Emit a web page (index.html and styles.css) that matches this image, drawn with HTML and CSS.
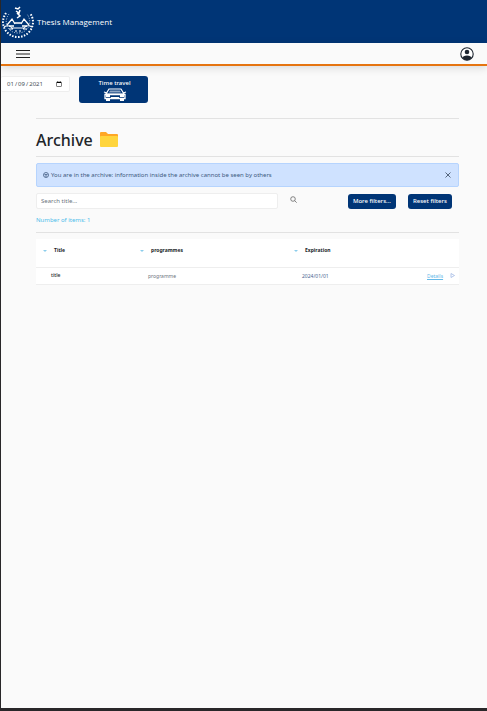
FILE: index.html
```html
<!DOCTYPE html>
<html lang="en">
<head>
<meta charset="utf-8">
<meta name="viewport" content="width=device-width, initial-scale=1">
<title>Thesis Management</title>
<link rel="stylesheet" href="styles.css">
</head>
<body>
<header class="brand">
  <svg class="crest" viewBox="0 0 34 34" fill="none" stroke="#fff" aria-hidden="true">
    <path d="M5 8Q-1 17 5 26Q10 32 17 32Q24 32 29 26Q35 17 29 8" stroke-width="2" stroke-dasharray="1.500 1.500"/>
    <path d="M8 9Q3 16 7 23Q11 28 17 28Q23 28 27 23Q31 16 26 9" stroke-width=".8" stroke-dasharray="1 1.500"/>
    <path d="M14 3l3 1 2-2M15 6l3 2 1-3M16 8l3 3-3 2" stroke-width="1.500"/>
    <path d="M6 20l5-6 3 5M20 19l3-5 5 6M8 21h5M21 21h5M13 18h8" stroke-width="1.300"/>
    <path d="M3 22q5-3 8 1h12q3-4 8-1M8 24h4M22 24h4M14 26h2M18 26h2" stroke-width="1.100"/>
  </svg>
  <span>Thesis Management</span>
</header>
<nav class="toolbar">
  <button class="icon-button" aria-label="Menu">
    <svg class="menu-icon" viewBox="0 0 14 10" stroke="#222" stroke-width="1"><path d="M0 1.500h14M0 5h14M0 8.500h14"/></svg>
  </button>
  <button class="icon-button" aria-label="Account">
    <svg class="user-icon" viewBox="0 0 14 14"><circle cx="7" cy="7" r="6.200" fill="#fff" stroke="#1d2530" stroke-width="1.100"/><circle cx="7" cy="5" r="2.300" fill="#1d2530"/><path d="M2.300 11Q3 8.400 7 8.400T11.700 11Q9.800 13.200 7 13.200T2.300 11z" fill="#1d2530"/></svg>
  </button>
</nav>
<div class="time-row">
  <input class="date" type="date" value="2021-01-09" aria-label="Current date">
  <button class="button travel">Time travel
    <svg class="car" viewBox="0 0 24 13" fill="none" stroke="#fff" aria-hidden="true">
      <path d="M6 1h12l3 5H3z" stroke-width="1.200"/><path d="M7 2.500h10l1 2H6z" fill="#8da5c4" stroke="none"/>
      <path d="M1 4l3 1M23 4l-3 1M2 6.500h20v4H2z" stroke-width="1.300"/><path d="M3 7h4v2H3zM17 7h4v2h-4zM8 9h8v1.500H8zM3 11h4v2H3zM17 11h4v2h-4z" fill="#fff" stroke="none"/>
    </svg>
  </button>
</div>
<main class="content">
  <h1 class="heading">Archive
    <svg class="folder" viewBox="0 0 18 16" aria-hidden="true"><path d="M1 0h5l2 2h9q1 0 1 1v9H0V1q0-1 1-1z" fill="#ffa726"/><path d="M1 4h16q1 0 1 1v9q0 1-1 1H1q-1 0-1-1V5q0-1 1-1z" fill="#ffd53d"/></svg>
  </h1>
  <div class="alert" role="status">
    <svg class="notice-icon" viewBox="0 0 6 6" fill="none" stroke="#405a80" stroke-width=".8" aria-hidden="true"><circle cx="3" cy="3" r="2.500"/><path d="M1.500 2.500h3M2 4h2"/></svg>
    <span class="message">You are in the archive: information inside the archive cannot be seen by others</span>
    <button class="icon-button" aria-label="Close"><svg class="close-icon" viewBox="0 0 6 6" stroke="#56677e" stroke-width="1"><path d="M.5 .5l5 5M5.500 .5l-5 5"/></svg></button>
  </div>
  <div class="filters">
    <input class="search" type="text" placeholder="Search title..." aria-label="Search title">
    <button class="icon-button search-button" aria-label="Search"><svg class="search-icon" viewBox="0 0 7 7" fill="none" stroke="#555" stroke-width=".7"><circle cx="3" cy="3" r="2.300"/><path d="M4.700 4.700l2 2"/></svg></button>
    <button class="button">More filters...</button>
    <button class="button">Reset filters</button>
  </div>
  <p class="count">Number of items: 1</p>
  <table class="items">
    <colgroup><col class="col-title"><col class="col-programme"><col><col class="col-details"><col class="col-open"></colgroup>
    <thead><tr><th><i class="sort"></i>Title</th><th><i class="sort"></i>programmes</th><th><i class="sort"></i>Expiration</th><th></th><th></th></tr></thead>
    <tbody><tr><td class="name">title</td><td>programme</td><td class="expiry">2024/01/01</td><td><a class="details" href="#">Details</a></td><td><svg class="open-icon" viewBox="0 0 5 5" fill="none" stroke="#a2b9e5" stroke-width=".8"><path d="M1 .5l3.500 2-3.500 2z"/></svg></td></tr></tbody>
  </table>
</main>
</body>
</html>
```
FILE: styles.css
```css
* { box-sizing: border-box; }
body {
  margin: 0;
  min-height: 100vh;
  border-left: 1px solid #292729;
  border-bottom: 3px solid #292729;
  background: #fafafa;
  color: #212529;
  font: 6px/10px "Noto Sans", sans-serif;
}
button, input { font: inherit; }
.brand {
  display: flex;
  align-items: center;
  gap: 2px;
  height: 43px;
  background: #003576;
  color: #fff;
  font-family: "Open Sans", "Noto Sans", sans-serif;
  font-size: 8px;
  font-weight: 500;
}
.crest { width: 34px; height: 34px; }
.toolbar {
  display: flex;
  align-items: center;
  justify-content: space-between;
  height: 23px;
  padding: 0 13px 0 15px;
  border-bottom: 2px solid #e57410;
  box-shadow: 0 2px 8px #0002;
}
.icon-button {
  display: flex;
  padding: 0;
  border: 0;
  background: none;
}
.menu-icon { width: 14px; height: 10px; }
.user-icon { width: 14px; height: 14px; }
.time-row {
  display: flex;
  align-items: flex-start;
  gap: 9px;
  padding-top: 10px;
}
.date {
  width: 69px;
  height: 16px;
  padding: 0 5px;
  border: 1px solid #eee;
  border-left: 0;
  border-radius: 2px;
  background: #fff;
  color: #495057;
}
.button {
  height: 15px;
  padding: 0 5px;
  border: 0;
  border-radius: 3px;
  background: #003576;
  color: #fff;
  font-weight: 500;
}
.travel {
  display: flex;
  flex-direction: column;
  align-items: center;
  justify-content: center;
  width: 69px;
  height: 27px;
  padding-left: 7px;
}
.car { width: 24px; height: 13px; }
.content { margin: 15px 28px 0 35px; }
.heading {
  display: flex;
  align-items: center;
  gap: 7px;
  height: 39px;
  margin: 0 0 6px;
  padding-top: 5px;
  border-top: 1px solid #e2e2e2;
  border-bottom: 1px solid #e2e2e2;
  font-size: 16px;
  font-weight: 500;
}
.folder { width: 18px; height: 16px; }
.alert {
  display: flex;
  align-items: center;
  gap: 2px;
  height: 24px;
  padding: 0 7px 0 6px;
  border: 1px solid #b6d4fe;
  border-radius: 2px;
  background: #cfe2ff;
  color: #405a80;
}
.notice-icon, .close-icon { width: 6px; height: 6px; }
.message { flex: 1; }
.filters {
  display: flex;
  align-items: center;
  gap: 12px;
  margin-top: 6px;
  padding-right: 7px;
}
.search {
  flex: 1;
  min-width: 0;
  height: 16px;
  padding: 0 4px;
  border: 1px solid #eee;
  border-radius: 2px;
  background: #fff;
}
.search::placeholder { color: #6c757d; }
.search-button { margin-right: 39px; padding-bottom: 4px; }
.search-icon { width: 7px; height: 7px; }
.count {
  margin: 6px 0 0;
  padding-bottom: 7px;
  border-bottom: 1px solid #e2e2e2;
  color: #4dbdea;
}
.items {
  width: 100%;
  margin-top: 6px;
  border-collapse: collapse;
  table-layout: fixed;
  background: #fff;
  font-size: 5px;
  line-height: 8px;
  text-align: left;
}
.items th { height: 28px; padding: 0 7px 5px; }
.items td { height: 17px; padding: 0 0 0 15px; border: solid #eee; border-width: 1px 0; color: #6c757d; }
.items .name { padding-bottom: 2px; color: #212529; font-weight: 500; }
.items .expiry { color: #49658f; }
.items td:nth-child(n+4) { padding: 0; }
.col-title { width: 97px; }
.col-programme { width: 154px; }
.col-details { width: 20px; }
.col-open { width: 12px; }
.sort {
  display: inline-block;
  margin-right: 7px;
  border: 2px solid transparent;
  border-top-color: #8bcdec;
  border-bottom: 0;
  vertical-align: middle;
}
.details { color: #65b9e8; }
.open-icon { display: block; width: 5px; height: 5px; margin-left: 3px; }
```
